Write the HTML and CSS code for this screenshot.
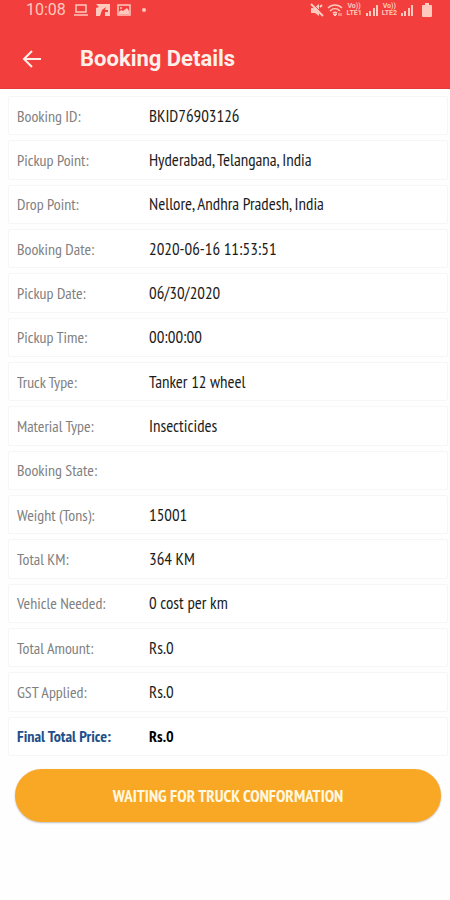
FILE: index.html
```
<!DOCTYPE html>
<html lang="en">
<head>
    <meta charset="UTF-8">
    <meta name="viewport" content="width=device-width, initial-scale=1.0">
    <title>Booking Details</title>
    <link rel="stylesheet" href="styles.css">
</head>
<body>
    <header class="header">
        <!-- status bar -->
        <div class="status">
            <span class="time">10:08</span>
            <svg class="icon" width="16" height="14" viewBox="0 0 16 14">
                <path d="M3 2h10v7H3zM1 12h14" fill="none" stroke="currentColor" stroke-width="1.5"/>
            </svg>
            <svg class="icon" width="14" height="14" viewBox="0 0 14 14">
                <path d="M0 1h14v12H9V9h3V7H9l1-3-4 3-2 6H0V5l3-1z" fill="currentColor"/>
            </svg>
            <svg class="icon" width="14" height="14" viewBox="0 0 14 14">
                <path d="M1 2h12v10H1z" fill="none" stroke="currentColor" stroke-width="1.5"/>
                <path d="M2 11V9l2-2 2 1 4-3 2 3v3z" fill="currentColor"/>
                <circle cx="4" cy="5" r="1" fill="currentColor"/>
            </svg>
            <span class="dot"></span>

            <div class="signals">
                <svg class="icon" width="14" height="14" viewBox="0 0 14 14">
                    <path d="M1 5h3l5-4v12L5 10H1z" fill="currentColor"/>
                    <path d="M2 0l12 12" stroke="#f23e3c" stroke-width="1"/>
                    <path d="M1 1l12 12M10 4l2-2" stroke="currentColor" stroke-width="2"/>
                </svg>
                <svg class="icon" width="16" height="14" viewBox="0 0 16 14">
                    <path d="M1 5c4-4 10-4 14 0M3 8c3-3 7-3 10 0M6 10c1-1 3-1 4 0" fill="none" stroke="currentColor" stroke-width="1.5"/>
                    <path d="M8 13l-2-2h4zM12 10v3M14 10v3" fill="currentColor" stroke="currentColor" stroke-width="1"/>
                </svg>
                <span class="lte">Vo))<br>LTE1</span>
                <svg class="icon" width="14" height="14" viewBox="0 0 14 14">
                    <path d="M2 13v-3M5 13V8M9 13V5M12 13V2" stroke="currentColor" stroke-width="2"/>
                </svg>
                <span class="lte">Vo))<br>LTE2</span>
                <svg class="icon" width="14" height="14" viewBox="0 0 14 14">
                    <path d="M2 13v-3M5 13V8M9 13V5M12 13V2" stroke="currentColor" stroke-width="2"/>
                </svg>
                <svg class="icon battery" width="10" height="14" viewBox="0 0 10 14">
                    <path d="M3 0h4v2h2a1 1 0 0 1 1 1v10a1 1 0 0 1-1 1H1a1 1 0 0 1-1-1V3a1 1 0 0 1 1-1h2z" fill="currentColor"/>
                </svg>
            </div>
        </div>

        <!-- title bar -->
        <div class="toolbar">
            <button class="back" type="button" aria-label="Back">
                <svg width="20" height="18" viewBox="0 0 20 18">
                    <path d="M19 9H2M10 1L2 9l8 8" fill="none" stroke="currentColor" stroke-width="2"/>
                </svg>
            </button>
            <h1 class="title">Booking Details</h1>
        </div>
    </header>

    <main class="content">
        <dl class="details">
            <div class="item"><dt>Booking ID:</dt><dd>BKID76903126</dd></div>
            <div class="item"><dt>Pickup Point:</dt><dd>Hyderabad, Telangana, India</dd></div>
            <div class="item"><dt>Drop Point:</dt><dd>Nellore, Andhra Pradesh, India</dd></div>
            <div class="item"><dt>Booking Date:</dt><dd>2020-06-16 11:53:51</dd></div>
            <div class="item"><dt>Pickup Date:</dt><dd>06/30/2020</dd></div>
            <div class="item"><dt>Pickup Time:</dt><dd>00:00:00</dd></div>
            <div class="item"><dt>Truck Type:</dt><dd>Tanker 12 wheel</dd></div>
            <div class="item"><dt>Material Type:</dt><dd>Insecticides</dd></div>
            <div class="item"><dt>Booking State:</dt><dd></dd></div>
            <div class="item"><dt>Weight (Tons):</dt><dd>15001</dd></div>
            <div class="item"><dt>Total KM:</dt><dd>364 KM</dd></div>
            <div class="item"><dt>Vehicle Needed:</dt><dd>0 cost per km</dd></div>
            <div class="item"><dt>Total Amount:</dt><dd>Rs.0</dd></div>
            <div class="item"><dt>GST Applied:</dt><dd>Rs.0</dd></div>
            <div class="item total"><dt>Final Total Price:</dt><dd>Rs.0</dd></div>
        </dl>

        <button class="submit" type="button">WAITING FOR TRUCK CONFORMATION</button>
    </main>
</body>
</html>
```
FILE: styles.css
```
* {
    box-sizing: border-box;
}

body {
    margin: 0;
    background-color: #fefefe;
    font-family: "PT Sans Narrow", "Roboto Condensed", "Liberation Sans", sans-serif;
    font-size: 16px;
    color: #1c1c1c;
}

.header {
    background-color: #f23e3c;
    border-bottom: 1px solid #e5393a;
    color: #fff0ea;
    font-family: Roboto, sans-serif;
}

/* status bar */
.status {
    display: flex;
    align-items: center;
    gap: 7px;
    height: 20px;
    padding: 0 18px 0 26px;
    color: #ffc9bd;
}

.time {
    font-size: 16px;
    line-height: 20px;
}

.icon {
    flex: none;
}

.dot {
    width: 4px;
    height: 4px;
    margin-left: 4px;
    border-radius: 50%;
    background-color: currentColor;
}

.signals {
    display: flex;
    align-items: center;
    gap: 3px;
    margin-left: auto;
}

.lte {
    font-size: 7px;
    font-weight: bold;
    line-height: 7px;
    text-align: center;
}

.battery {
    margin-left: 5px;
}

/* title bar */
.toolbar {
    display: flex;
    align-items: center;
    height: 68px;
    padding: 10px 22px 0;
}

.back {
    display: flex;
    width: 58px;
    padding: 0;
    border: 0;
    background: none;
    color: inherit;
}

.title {
    margin: 0;
    font-size: 22px;
    font-weight: 700;
    line-height: 28px;
}

/* booking rows */
.content {
    padding: 7px 2px 24px 8px;
}

.details {
    display: grid;
    grid-auto-rows: 1fr;
    gap: 5px;
    min-height: 660px;
    margin: 0;
}

.item {
    display: flex;
    align-items: center;
    padding: 0 8px;
    border: 1px solid #f6f6f6;
    border-radius: 2px;
    background-color: #fff;
    line-height: 20px;
}

.item dt {
    width: 132px;
    color: #808080;
}

.item dd {
    flex: 1;
    margin: 0;
    font-size: 17px;
}

.total {
    font-weight: bold;
}

.total dt {
    color: #1d4f88;
}

.total dd {
    color: #000;
    font-size: 16px;
}

.submit {
    display: block;
    width: calc(100% - 14px);
    height: 53px;
    margin: 13px 7px 0;
    border: 0;
    border-radius: 27px;
    background-color: #f9a825;
    box-shadow: 0 1px 2px rgba(0, 0, 0, 0.25);
    color: #fff8e0;
    font-family: inherit;
    font-size: 17px;
    font-weight: bold;
    line-height: 20px;
}
```
